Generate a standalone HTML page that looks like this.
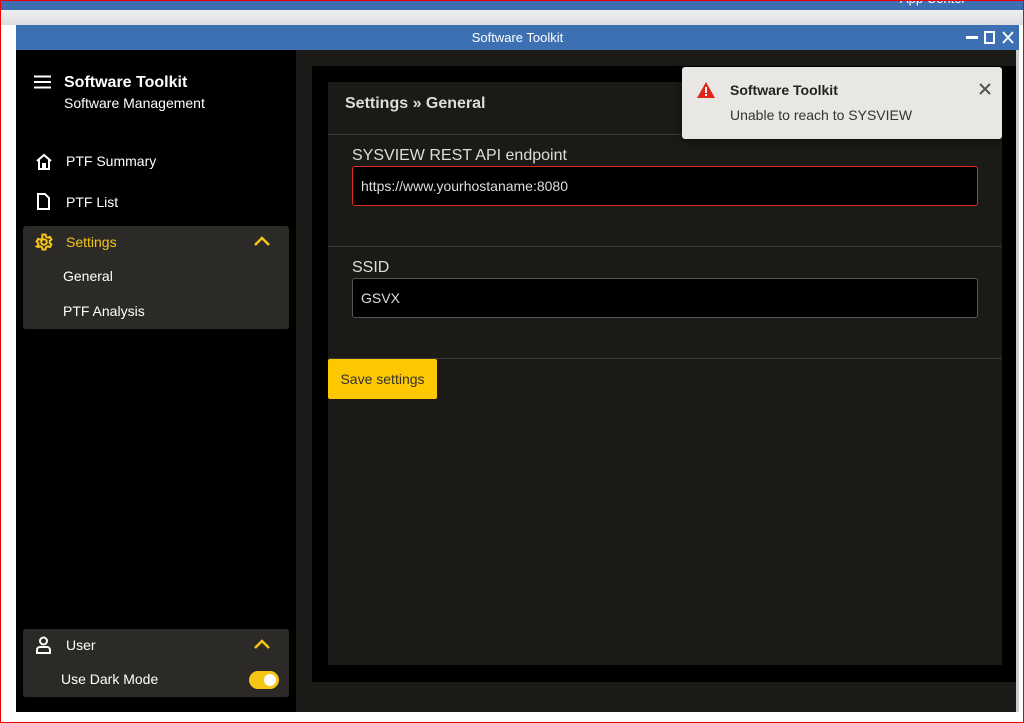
<!DOCTYPE html>
<html><head><style>
*{margin:0;padding:0;box-sizing:border-box}
body{width:1024px;height:723px;position:relative;background:#fff;font-family:"Liberation Sans",sans-serif;overflow:hidden}
.abs{position:absolute}
.w{color:#fff}
</style></head><body>
<div class="abs" style="left:0;top:0;width:1024px;height:723px;border:1px solid #e00;z-index:10;pointer-events:none"></div>
<div class="abs" style="left:0;top:0;width:1024px;height:10px;background:#3d6fb0;overflow:hidden"><span class="abs" style="left:900px;top:-9px;color:#fff;font-size:13px">App Center</span></div>
<div class="abs" style="left:0;top:10px;width:1024px;height:15px;background:linear-gradient(#eef0f2,#dcdde0)"></div>
<div class="abs" style="left:16px;top:25px;width:1003px;height:25px;background:#3d70b2;color:#fff;font-size:13px;text-align:center;line-height:25px">Software Toolkit
<span class="abs" style="left:950px;top:11px;width:12px;height:3px;background:#fff"></span>
<span class="abs" style="left:968px;top:6px;width:11px;height:13px;border:2px solid #fff"></span>
<svg class="abs" style="left:986px;top:6px" width="12" height="13" stroke="#fff" stroke-width="1.8"><path d="M1 1l10 11M11 1L1 12"/></svg></div>
<div class="abs" style="left:16px;top:50px;width:280px;height:662px;background:#000"></div>
<div class="abs" style="left:296px;top:50px;width:720px;height:662px;background:#1c1a16"></div>
<div class="abs" style="left:1016px;top:50px;width:3px;height:662px;background:#ccc"></div>
<!-- sidebar -->
<svg class="abs" style="left:34px;top:75px" width="17" height="14"><path d="M0 1.5h17M0 7h17M0 12.5h17" stroke="#fff" stroke-width="2"/></svg>
<div class="abs w" style="left:64px;top:74px;font-size:16px;font-weight:bold">Software Toolkit</div>
<div class="abs w" style="left:64px;top:95px;font-size:14px">Software Management</div>
<svg class="abs" style="left:35px;top:153px" width="18" height="17" fill="none" stroke="#fff" stroke-width="2"><path d="M2 8L9 2l7 6M4 7v9h4v-5h2v5h4V7"/></svg>
<div class="abs w" style="left:66px;top:153px;font-size:14px">PTF Summary</div>
<svg class="abs" style="left:37px;top:193px" width="13" height="17" fill="none" stroke="#fff" stroke-width="2"><path d="M1 1h7l4 4v11H1z"/></svg>
<div class="abs w" style="left:66px;top:194px;font-size:14px">PTF List</div>
<div class="abs" style="left:23px;top:226px;width:266px;height:103px;background:#2c2a26;border-radius:3px"></div>
<svg class="abs" style="left:35px;top:233px" width="18" height="18" fill="none" stroke="#f5c518" stroke-width="2"><circle cx="9" cy="9" r="2.8"/><path d="M7.5 1.5h3l.5 2.2 1.8 1 2.1-.8 1.5 2.6-1.7 1.5v2l1.7 1.5-1.5 2.6-2.1-.8-1.8 1-.5 2.2h-3l-.5-2.2-1.8-1-2.1.8L1.6 13.5l1.7-1.5V10L1.6 8.5 3.1 5.9l2.1.8 1.8-1z"/></svg>
<div class="abs" style="left:66px;top:234px;font-size:14px;color:#f5c518">Settings</div>
<svg class="abs" style="left:254px;top:236px" width="16" height="10" fill="none" stroke="#f5c518" stroke-width="2.5"><path d="M1 9l7-7 7 7"/></svg>
<div class="abs w" style="left:63px;top:268px;font-size:14px">General</div>
<div class="abs w" style="left:63px;top:303px;font-size:14px">PTF Analysis</div>
<div class="abs" style="left:23px;top:629px;width:266px;height:68px;background:#2c2a26;border-radius:3px"></div>
<svg class="abs" style="left:36px;top:636px" width="15" height="18" fill="none" stroke="#fff" stroke-width="2"><circle cx="7.5" cy="5" r="3.5"/><path d="M1 17v-3a3 3 0 0 1 3-3h7a3 3 0 0 1 3 3v3z"/></svg>
<div class="abs w" style="left:66px;top:637px;font-size:14px">User</div>
<svg class="abs" style="left:254px;top:639px" width="16" height="10" fill="none" stroke="#f5c518" stroke-width="2.5"><path d="M1 9l7-7 7 7"/></svg>
<div class="abs w" style="left:61px;top:671px;font-size:14px">Use Dark Mode</div>
<div class="abs" style="left:249px;top:671px;width:30px;height:18px;border-radius:9px;background:#f5c518"><div class="abs" style="right:3px;top:3px;width:12px;height:12px;border-radius:6px;background:#fff"></div></div>
<!-- content -->
<div class="abs" style="left:312px;top:66px;width:704px;height:616px;background:#000"></div>
<div class="abs" style="left:328px;top:82px;width:674px;height:583px;background:#1c1a16"></div>
<div class="abs" style="left:345px;top:95px;font-size:16px;font-weight:bold;color:#ddd">Settings » General</div>
<div class="abs" style="left:328px;top:134px;width:674px;height:1px;background:#3a3935"></div>
<div class="abs" style="left:352px;top:147px;font-size:16px;color:#ddd">SYSVIEW REST API endpoint</div>
<div class="abs" style="left:352px;top:166px;width:626px;height:40px;background:#000;border:1px solid #e02a1a;border-radius:3px;color:#ddd;font-size:14px;line-height:38px;padding-left:8px">https://www.yourhostaname:8080</div>
<div class="abs" style="left:328px;top:246px;width:674px;height:1px;background:#3a3935"></div>
<div class="abs" style="left:352px;top:259px;font-size:16px;color:#ddd">SSID</div>
<div class="abs" style="left:352px;top:278px;width:626px;height:40px;background:#000;border:1px solid #555;border-radius:3px;color:#ddd;font-size:14px;line-height:38px;padding-left:8px">GSVX</div>
<div class="abs" style="left:328px;top:358px;width:674px;height:1px;background:#3a3935"></div>
<div class="abs" style="left:328px;top:359px;width:109px;height:40px;background:#fdc800;border-radius:2px;font-size:14px;color:#333;line-height:40px;text-align:center">Save settings</div>
<!-- toast -->
<div class="abs" style="left:682px;top:67px;width:320px;height:72px;background:#e8e7e3;border-radius:3px;box-shadow:0 2px 8px rgba(0,0,0,.5)"></div>
<svg class="abs" style="left:697px;top:82px" width="18" height="16"><path d="M9 0L18 16H0z" fill="#e0261a"/><rect x="8" y="5" width="2" height="6" fill="#fff"/><rect x="8" y="12" width="2" height="2" fill="#fff"/></svg>
<div class="abs" style="left:730px;top:82px;font-size:14px;font-weight:bold;color:#222">Software Toolkit</div>
<div class="abs" style="left:730px;top:107px;font-size:14px;color:#333">Unable to reach to SYSVIEW</div>
<svg class="abs" style="left:979px;top:83px" width="12" height="12" stroke="#555" stroke-width="2"><path d="M1 1l10 10M11 1L1 11"/></svg>
</body></html>
